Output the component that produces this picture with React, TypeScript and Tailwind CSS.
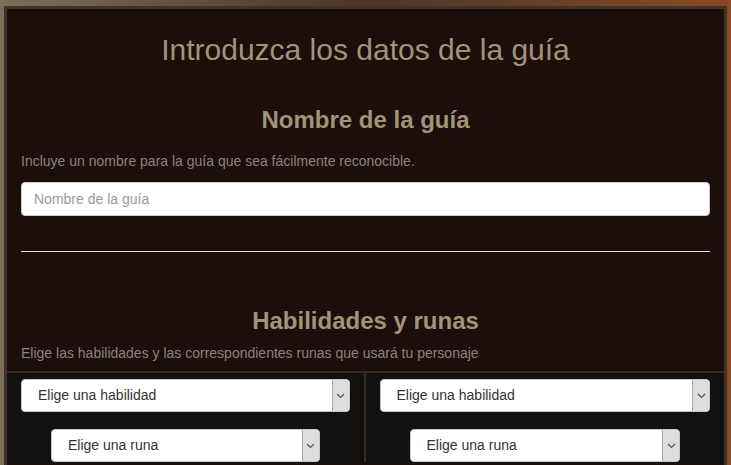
import React from "react";

const Chevron = () => (
  <svg width="9" height="6" viewBox="0 0 9 6" fill="none">
    <path d="M1 1l3.5 3.5L8 1" stroke="#555" strokeWidth="1.2" />
  </svg>
);

const FakeSelect: React.FC<{ label: string; className?: string }> = ({ label, className }) => (
  <div
    className={
      "flex h-[33px] items-stretch rounded-[4px] border border-[#c8c8c8] bg-white overflow-hidden " +
      (className || "")
    }
  >
    <div className="flex flex-1 items-center pl-4 text-[14px] text-[#333]">{label}</div>
    <div className="flex w-[17px] items-center justify-center border-l border-[#a9a9a9] bg-[#dddddd]">
      <Chevron />
    </div>
  </div>
);

export default function App() {
  return (
    <div
      className="h-[465px] w-[731px] overflow-hidden bg-gradient-to-r from-[#7d6e5c] via-[#4a3526] to-[#8a4a22] pl-[4px] pr-[4px] pt-[6px]"
      style={{ fontFamily: '"Liberation Sans", Arial, sans-serif' }}
    >
      <div className="h-full border-[3px] border-b-0 border-[#3d322c] bg-[#1c0e0a]">
        <div className="px-[14px]">
          <h1 className="pt-[23px] text-center text-[30px] leading-[36px] text-[#a39378]">
            Introduzca los datos de la guía
          </h1>

          <h2 className="mt-[38px] text-center text-[24px] font-bold leading-[28px] text-[#a39378]">
            Nombre de la guía
          </h2>
          <p className="mt-[18px] text-[14px] leading-[18px] text-[#8a8480]">
            Incluye un nombre para la guía que sea fácilmente reconocible.
          </p>
          <div className="mt-[12px] flex h-[34px] items-center rounded-[4px] border border-[#ccc] bg-white px-3 text-[14px] text-[#999]">
            Nombre de la guía
          </div>
          <div className="mt-[35px] h-px bg-[#eadcc4]" />

          <h2 className="mt-[55px] text-center text-[24px] font-bold leading-[28px] text-[#a39378]">
            Habilidades y runas
          </h2>
          <p className="mt-[9px] text-[14px] leading-[18px] text-[#8a8480]">
            Elige las habilidades y las correspondientes runas que usará tu personaje
          </p>
        </div>

        <div className="mt-[9px] grid grid-cols-2 border-t-[2px] border-[#3a2b22] bg-[#131010]">
          <div className="border-r-[2px] border-[#3a2b22] px-[14px] pt-[6px]">
            <FakeSelect label="Elige una habilidad" />
            <FakeSelect label="Elige una runa" className="mx-[30px] mt-[17px]" />
          </div>
          <div className="px-[14px] pt-[6px]">
            <FakeSelect label="Elige una habilidad" />
            <FakeSelect label="Elige una runa" className="mx-[30px] mt-[17px]" />
          </div>
        </div>
      </div>
    </div>
  );
}
